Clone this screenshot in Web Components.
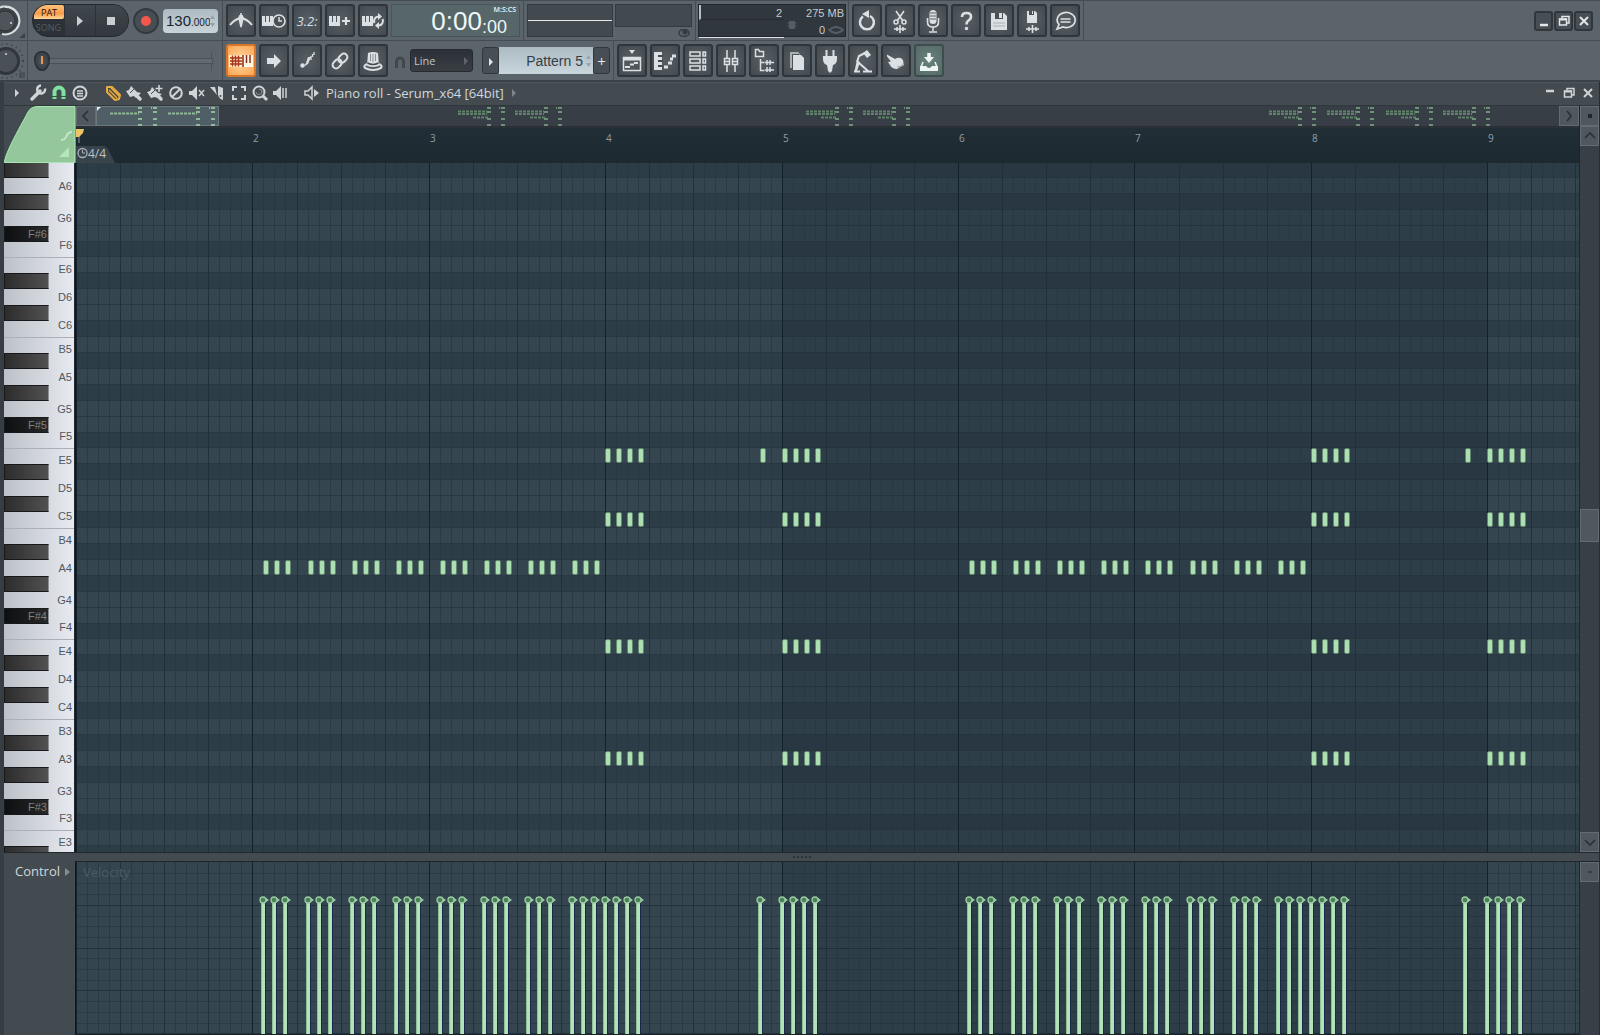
<!DOCTYPE html>
<html lang="en">
<head>
<meta charset="utf-8">
<title>Piano roll</title>
<style>
  html, body { margin: 0; height: 100%; background: #434b51; }
  body { font: 13px "Open Sans", "Noto Sans", sans-serif; color: #d5dade; }
  daw-app { height: 100vh; }
</style>
</head>
<body>
<daw-app></daw-app>
<script>
const BAR = 176.4, STEP = BAR / 16, ROW = 191 / 12;

/* One set of line icons; each is drawn in its own viewBox. */
const W = (x, y) => `<path fill="currentColor" stroke="none" d="M${x} ${y}h3v6h1v-6h3v6h1v-6h3v10h-11z"/>`;
const ICONS = {
  metronome: `<path d="M4 20q4-5 9-6.500M26 20q-4-5-9-6.500" fill="none" stroke-width="2"/><path d="M15 8v14M13 13l2 9 2-9z" fill="none" stroke-width="1.500"/><circle cx="15" cy="12" r="2" fill="currentColor"/>`,
  wait: W(3, 11) + `<circle cx="20" cy="16" r="6" fill="#4a5156" stroke-width="1.600"/><path d="M20 12v4h3" fill="none" stroke-width="1.500"/>`,
  count: ``,
  blend: W(4, 11) + `<path d="M21 12v8M17 16h8" fill="none" stroke-width="2.200"/>`,
  loop: W(4, 11) + `<path d="M16.500 18a4.500 4.500 0 0 1 4-6.500M24.500 14a4.500 4.500 0 0 1-4 6.500" fill="none" stroke-width="2"/><path d="M20 8l4 3.500-4 3.500zM21 24l-4-3.500 4-3.500z" fill="currentColor" stroke="none"/>`,
  keyboard: `<rect x="3" y="10" width="14" height="12" fill="#fff3cf" stroke="none"/><path d="M4 13h12M4 16h12M4 19h12M6.500 10.500v11M9.500 10.500v11M12.500 10.500v11" stroke="#a8351c" stroke-width="1.500" fill="none"/><path d="M17 10h10v12H17z" fill="#fff8e8" stroke="none"/><path d="M17 10v12M20.500 10v8M24 10v8" stroke="#8e2c18" stroke-width="1.500"/>`,
  arrow: `<path d="M8 13h7V9l7 7-7 7v-4H8z" fill="currentColor" stroke="none"/>`,
  slide: `<circle cx="10.500" cy="20.500" r="2.200" fill="currentColor" stroke="none"/><path d="M11 22l5-3 3-7h-3l-2 6z" fill="currentColor" stroke="none"/><path d="M19 15v-4M20.500 12v-3M22 10v-3" stroke-width="1.300"/>`,
  chain: `<g fill="none" stroke-width="2" transform="rotate(-45 15 16)"><rect x="6" y="12.500" width="10" height="7" rx="3.500"/><rect x="14" y="12.500" width="10" height="7" rx="3.500"/></g>`,
  hat: `<path d="M10 8q5-2 10 0l1 13q-6 2-12 0z" fill="currentColor" stroke="none"/><path d="M9 19q-4 2-2 4 8 4 16 0 2-2-2-4" fill="none" stroke-width="2"/><path d="M9.500 18q5.500 3 11 0" fill="none" stroke="#454c51" stroke-width="1.500"/><path d="M12.500 9v7M15 9v8M17.500 9v7" stroke="#8a9196" stroke-width="1"/>`,
  undo: `<path d="M11 11.500a7 7 0 1 0 7-.500" fill="none" stroke-width="2.500"/><path d="M10 9l7-4v8z" fill="currentColor" stroke="none"/>`,
  cut: `<path d="M11 6l7 10M19 6l-7 10" fill="none" stroke-width="1.600"/><circle cx="11" cy="17" r="2" fill="none" stroke-width="1.500"/><circle cx="19" cy="17" r="2" fill="none" stroke-width="1.500"/><path d="M9 24h12M12 22v4M15 20v8M18 22v4" stroke-width="1.600"/>`,
  mic: `<rect x="11.500" y="5" width="7" height="14" rx="3.500" fill="currentColor" stroke="none"/><path d="M12 8h6M12 11h6M12 14h6" stroke="#5a6268" stroke-width="1"/><path d="M9.500 13v4q0 5 5.500 5t5.500-5v-4M15 22v4M11 27h8" fill="none" stroke-width="1.600"/>`,
  help: `<path d="M11 12q0-4 4.500-4t4.500 3.500q0 2.500-2.500 4-2 1.500-2 4" fill="none" stroke-width="2.600"/><circle cx="15.500" cy="23.500" r="1.700" fill="currentColor" stroke="none"/>`,
  save: `<path d="M7 8h13l3 3v14H7z" fill="currentColor" stroke="none"/><rect x="11" y="8" width="8" height="6" fill="#4a5156" stroke="none"/><rect x="15" y="8" width="3" height="5" fill="currentColor" stroke="none"/><path d="M9 18h12M9 21h12" stroke="#aab0b4" stroke-width="1"/>`,
  saveNew: `<path d="M10 6h8l2 2v10H10z" fill="currentColor" stroke="none"/><path d="M12 6h5v4h-5z" fill="#4a5156" stroke="none"/><path d="M15 6h1v3h-1z" fill="currentColor" stroke="none"/><path d="M9 24h13M12 22v4M15.500 20v8M19 22v4" stroke-width="1.600"/>`,
  chat: `<path d="M7 24l2-4.500a9 7.500 0 1 1 4 2.500z" fill="none" stroke-width="1.700"/><path d="M10.500 14h10M10.500 17h10" stroke-width="1.500"/>`,
  playlist: `<rect x="6.500" y="12.500" width="17" height="13" fill="none" stroke-width="1.500"/><path d="M6 14h18" stroke-width="3"/><path d="M12 5h6l-3 4z" fill="currentColor" stroke="none"/><path d="M8 22h5M13 19.500h4M17 18h4" stroke-width="1.800"/>`,
  pianoroll: `<path d="M4 7h8v18H4z" fill="currentColor" stroke="none"/><path d="M8 11h5M8 16h5M8 21h5" stroke="#454c51" stroke-width="2"/><path d="M14 22h4M18 18h4M20 14h3M22 11h4" stroke-width="3"/>`,
  rack: `<g fill="none" stroke-width="1.500"><rect x="7" y="7" width="10" height="4"/><rect x="7" y="14" width="10" height="4"/><rect x="7" y="21" width="10" height="4"/><rect x="20" y="7" width="2.500" height="4"/><rect x="20" y="14" width="2.500" height="4"/><rect x="20" y="21" width="2.500" height="4"/></g>`,
  mixer: `<g fill="none" stroke-width="1.500"><path d="M11 5v8M11 20v7M19 5v8M19 20v7"/><rect x="8.500" y="13.500" width="5" height="6"/><rect x="16.500" y="13.500" width="5" height="6"/><path d="M8 16.500h6M16 16.500h6"/></g>`,
  browser: `<path d="M6.500 5.500v6h8v-5h-4l-1-2h-3z" fill="none" stroke-width="1.500"/><path d="M11.500 14v11.500h4M11.500 17.500h4" fill="none" stroke-width="1.500"/><path d="M16 17.500h9M18 15v5M21 15v5M16 25h9M18 22v5M21 22v5" stroke-width="1.500"/>`,
  pages: `<path d="M8 7h8l2 2v14H8z" fill="#aab1b5" stroke="none"/><path d="M11 10h8l3 3v12H11z" fill="currentColor" stroke="none"/><path d="M10.500 25V9.500h7" fill="none" stroke="#4a5156" stroke-width="1"/>`,
  plug: `<path d="M8 11h14v3q0 5-4 6l-1 6-2 2-2-2-1-6q-4-1-4-6z" fill="currentColor" stroke="none"/><path d="M11.500 5v7M18.500 5v7" stroke-width="2"/>`,
  script: `<path d="M15 8l4-3 4 5-4 3z" fill="currentColor" stroke="none"/><path d="M17 8l-6 3-2 6" fill="none" stroke-width="2"/><path d="M9 15l3 2-3 9H6.500z" fill="currentColor" stroke="none"/><path d="M11 18l9 8M6 26.500h6M15 26.500h9" fill="none" stroke-width="2"/>`,
  touch: `<path d="M6 9.500l8 4.500 2-1q4-1 6 2l1 5-7 4q-5 0-7-4l-2-3 3-.500-4-5z" fill="currentColor" stroke="none"/><path d="M16 22q6 0 7-5" fill="none" stroke="#8c9398" stroke-width="1"/>`,
  download: `<path d="M15 8v6" stroke-width="3.500"/><path d="M10 12h10l-5 6z" fill="currentColor" stroke="none"/><path d="M9 17l-2 5M21 17l2 5" fill="none" stroke-width="1.500"/><path d="M6 21h6q3 4 6 0h6v5H6z" fill="currentColor" stroke="none"/>`
};
/* Small tool icons, 20 x 20. */
const SMALL = {
  tri: `<path d="M8 6l4 4-4 4z" fill="currentColor"/>`,
  wrench: `<path d="M4 16l8-8" stroke="currentColor" stroke-width="3.500" stroke-linecap="round"/><path d="M17 5.500a4 4 0 1 1-4-3" fill="none" stroke="currentColor" stroke-width="2.500"/>`,
  magnet: `<path d="M5.500 16V9a4.500 4.500 0 0 1 9 0v7" fill="none" stroke="currentColor" stroke-width="4"/><path d="M3 13.500h5M12 13.500h5" stroke="#2c5a3c"/>`,
  list: `<circle cx="10" cy="10" r="6.500" fill="none" stroke="currentColor" stroke-width="2"/><path d="M7 8h6M7 10.500h6M7 13h6" stroke="currentColor" stroke-width="1.400"/>`,
  pencil: `<path d="M4 4l5 0 8 8-1 4-4 1-8-8z" fill="#4c4535" stroke="#e6ab45" stroke-width="2" stroke-linejoin="round"/><path d="M6 7l8 8M8 5l8 8" stroke="#e6ab45" stroke-width="1.500"/>`,
  brush: `<path d="M2 8l3-1 2-4 6 6 4 1-5 5-2-2-4 1z" fill="currentColor"/><path d="M12 12l4 4" stroke="currentColor" stroke-width="3.500" stroke-linecap="round"/><path d="M6 10l5-5" stroke="#434b51"/>`,
  brush2: `<path d="M2 9l3-1 2-4 6 6 4 1-5 4-2-1-4 1z" fill="currentColor"/><path d="M12 12l4 4" stroke="currentColor" stroke-width="3.500" stroke-linecap="round"/><path d="M6 11l5-5" stroke="#434b51"/><path d="M14 2v7M10.500 5.500h7" stroke="currentColor" stroke-width="1.600"/>`,
  no: `<circle cx="10" cy="10" r="5.800" fill="none" stroke="currentColor" stroke-width="2"/><path d="M6 14l8-8" stroke="currentColor" stroke-width="2"/>`,
  mute: `<path d="M2 8h3l5-5v14l-5-5H2z" fill="currentColor"/><path d="M12 7l5 6M17 7l-5 6" stroke="currentColor" stroke-width="1.500"/>`,
  knife: `<path d="M2 4h5l2 8z" fill="currentColor"/><path d="M10 3l5 2v12q-4-1-5-5z" fill="currentColor"/><circle cx="12.500" cy="13" r="1" fill="#434b51"/>`,
  select: `<path d="M4 8V4h4M12 4h4v4M16 12v4h-4M8 16H4v-4" fill="none" stroke="currentColor" stroke-width="2"/>`,
  zoom: `<circle cx="9" cy="9" r="5.500" fill="none" stroke="currentColor" stroke-width="2"/><path d="M6 9a3 3 0 0 0 6-1M9 6a3 3 0 0 1 3 3" fill="none" stroke="#8d959b"/><path d="M13 13l4 4" stroke="currentColor" stroke-width="3"/>`,
  play: `<path d="M2 8h3l5-5v14l-5-5H2z" fill="currentColor"/><path d="M12 5v10M15 5v10" stroke="currentColor" stroke-width="1.500"/>`,
  speaker: `<path d="M3 8h3l4-4v12l-4-4H3z" fill="none" stroke="currentColor" stroke-width="1.500"/><path d="M12 6l5 4-5 4z" fill="currentColor"/>`,
  min: `<path d="M6 8h8" stroke="currentColor" stroke-width="2.500"/>`,
  minLow: `<path d="M6 14h8" stroke="currentColor" stroke-width="2.500"/>`,
  restore: `<path d="M8 7V5.500h7V12h-2" fill="none" stroke="currentColor" stroke-width="1.500"/><rect x="5.500" y="8" width="7" height="6" fill="none" stroke="currentColor" stroke-width="1.500"/><path d="M5 8.500h8" stroke="currentColor" stroke-width="2"/>`,
  close: `<path d="M6 6l8 8M14 6l-8 8" stroke="currentColor" stroke-width="2"/>`,
  left: `<path d="M12 5l-5 5 5 5" fill="none" stroke="#2a3137" stroke-width="1.700"/>`,
  right: `<path d="M8 5l4 5-4 5" fill="none" stroke="#2a3137" stroke-width="1.700"/>`,
  up: `<path d="M5 12l5-5 5 5" fill="none" stroke="#2a3137" stroke-width="1.700"/>`,
  down: `<path d="M5 8l5 5 5-5" fill="none" stroke="#2a3137" stroke-width="1.700"/>`,
  dot: `<rect x="8" y="8" width="4" height="4" fill="#20262b"/>`,
  dash: `<path d="M8 10h4" stroke="#20262b"/>`
};

function define(name, html, after) {
  customElements.define(name, class extends HTMLElement {
    connectedCallback() {
      if (this.shadowRoot) return;
      const root = this.attachShadow({ mode: "open" });
      root.innerHTML = typeof html === "function" ? html(this) : html;
      if (after) after(root, this);
    }
  });
}

/* Square toolbar button with a large icon, or slotted text. */
define("tool-button", el => `
<style>
  :host { display: block; flex: none; }
  button { display: grid; place-items: center; box-sizing: border-box; width: 30px; height: 33px; padding: 0;
    border: 2px solid #2f363b; border-radius: 3px; color: #dbe0e4;
    background: radial-gradient(#575f65, #434a4f); font: italic 13px "Open Sans", sans-serif; }
  :host([tone="orange"]) button { background: radial-gradient(#ffd9a0, #fba452); border-color: #d9762a; }
  :host([tone="green"]) button { background: radial-gradient(#6a827d, #566a68); border-color: #3c4d4e; color: #eef6f4; }
  svg { display: block; margin: -2px; }
</style>
<button aria-label="${el.getAttribute("label")}">${ICONS[el.getAttribute("icon")] ? `<svg width="30" height="32" viewBox="0 0 30 32" stroke="currentColor">${ICONS[el.getAttribute("icon")]}</svg>` : "<slot></slot>"}</button>`);

/* Small 20 px button. */
define("mini-button", el => `
<style>
  :host { display: block; flex: none; }
  button { display: block; box-sizing: border-box; width: 100%; height: 20px; padding: 0; border: 0; background: none; color: inherit; }
  svg { display: block; margin: auto; }
  :host([kind="box"]) button { border: 1px solid #646c72; background: #50585f; }
  :host([kind="box"]) svg { margin: -1px; }
  :host([kind="win"]) button { border: 2px solid #30373c; border-radius: 3px; background: #474e54; }
  :host([kind="win"]) svg { margin: -2px; }
</style>
<button aria-label="${el.getAttribute("label")}"><svg width="20" height="20" viewBox="0 0 20 20">${SMALL[el.getAttribute("icon")]}</svg></button>`);

define("transport-bar", `
<style>
  :host { display: flex; align-items: center; gap: 4px; padding: 0 4px; }
  .pill { display: flex; width: 97px; height: 33px; border-radius: 16px; overflow: hidden; background: #2b3136; box-sizing: border-box; border: 1px solid #23282d; }
  .mode { display: flex; flex-direction: column; width: 31px; }
  button { border: 0; padding: 0; background: none; font: 9px "Open Sans", sans-serif; color: #565d62; }
  .pat { height: 14px; margin-left: 1px; border-radius: 10px 2px 2px 0; background: linear-gradient(#ffc37c, #f99b48 60%, #ffd79a); color: #1d1309; }
  .song { flex: 1; }
  .key { width: 30px; margin-left: 1px; background: linear-gradient(#40474d, #32383d); display: grid; place-items: center; }
  .stop { flex: 1; padding-right: 2px; }
  .rec { width: 26px; height: 26px; border-radius: 50%; background: #474e53; border: 2px solid #33393e; display: grid; place-items: center; }
  .tempo { display: flex; align-items: center; box-sizing: border-box; width: 55px; height: 24px; padding: 0 3px; border-radius: 4px; background: linear-gradient(#aebac1, #c8d4da); }
  input { border: 0; padding: 0; background: none; color: #1c242b; font: 15px/24px "Liberation Sans", sans-serif; width: 25px; height: 24px; outline: 0; }
  input + input { width: 19px; font-size: 10px; height: 20px; padding-top: 4px; line-height: 20px; box-sizing: border-box; }
  .spin { flex: none; margin-left: auto; }
</style>
<div class="pill">
  <div class="mode"><button class="pat">PAT</button><button class="song">SONG</button></div>
  <button class="key" aria-label="Play"><svg width="8" height="12"><path d="M1 1l6 5-6 5z" fill="#c9ced2"/></svg></button>
  <button class="key stop" aria-label="Stop"><svg width="8" height="8"><rect width="8" height="8" fill="#c9ced2"/></svg></button>
</div>
<button class="rec" aria-label="Record"><svg width="10" height="10"><circle cx="5" cy="5" r="5" fill="#f4574d"/></svg></button>
<div class="tempo"><input aria-label="Tempo" value="130"><input aria-label="Tempo fraction" value=".000"><svg class="spin" width="5" height="12"><path d="M0 4l2.500-4L5 4zM0 8l2.500 4L5 8z" fill="#93a0a8"/></svg></div>`);

define("position-slider", `
<style>
  :host { display: flex; align-items: center; padding: 0 9px 0 6px; }
  label { flex: 1; display: flex; }
  input { appearance: none; -webkit-appearance: none; flex: 1; min-width: 0; margin: 0; height: 30px; outline: 0;
    background: linear-gradient(#62696f, #62696f) 9px 13px / calc(100% - 10px) 4px no-repeat, linear-gradient(#4a5157, #4a5157) 8px 12px / calc(100% - 8px) 6px no-repeat,
      linear-gradient(#4a5157, #4a5157) calc(100% - 1px) 6px / 1px 19px no-repeat; }
  input::-webkit-slider-thumb { -webkit-appearance: none; width: 16px; height: 20px; border-radius: 8px 8px 8px 8px / 8px 8px 12px 12px; border: 1px solid #23282c;
    background: linear-gradient(#e3955a, #e3955a) 6px 4px / 2px 8px no-repeat, radial-gradient(#50585e, #2b3136); }
</style>
<label><input type="range" min="0" max="100" value="0" aria-label="Song position"></label>`);

define("time-display", `
<style>
  :host { display: flex; justify-content: flex-end; box-sizing: border-box; width: 129px; height: 33px; padding-right: 3px; border: 1px solid #465656; background: #566669; color: #edf7f8; font-family: "Liberation Sans", sans-serif; }
  .main { font-size: 26px; line-height: 33px; }
  .side { display: flex; flex-direction: column; align-items: flex-end; }
  .unit { font: 600 7px/10px "Open Sans", sans-serif; }
  .cs { font-size: 18px; line-height: 24px; margin-right: 9px; }
</style>
<div class="main">0:00</div><div class="side"><div class="unit">M:S:CS</div><div class="cs">:00</div></div>`);

define("scope-panel", `
<style>
  :host { display: flex; gap: 2px; align-items: flex-start; }
  .scope { box-sizing: border-box; width: 86px; height: 33px; border: 1px solid #343b41; background: linear-gradient(#e3e8ea, #e3e8ea) 0 15px / 100% 1px no-repeat, #42494f; }
  .peak { display: flex; flex-direction: column; align-items: flex-end; gap: 2px; }
  .meter { box-sizing: border-box; width: 77px; height: 23px; border: 1px solid #343b41; background: #42494f; }
  .peak svg { margin-right: 2px; }
</style>
<div class="scope"></div><div class="peak"><div class="meter"></div><svg width="12" height="8"><ellipse cx="6" cy="4" rx="5" ry="3.500" fill="none" stroke="#343b41" stroke-width="1.500"/><circle cx="7" cy="3" r="2.500" fill="#343b41"/></svg></div>`);

define("load-panel", `
<style>
  :host { display: grid; grid-template-columns: 85px 1fr; box-sizing: border-box; width: 148px; height: 33px; border: 1px solid #22282d; background: #30373d; color: #c5cbd0; font: 11px/16px "Liberation Sans", sans-serif; }
  .cpu { border-left: 2px solid #b8bec2; border-bottom: 1px solid #262c31; text-align: right; padding-right: 2px; height: 14px; }
  .left { border-bottom: 1px solid #dfe3e6; display: flex; flex-direction: column; box-sizing: border-box; }
  .right { text-align: right; padding-right: 1px; margin-left: 3px; }
  .poly { display: flex; align-items: center; justify-content: flex-end; gap: 3px; height: 17px; }
  .chip { margin-right: auto; align-self: flex-start; }
</style>
<div class="left"><div class="cpu">2</div></div>
<div class="right"><div>275 MB</div><div class="poly"><svg class="chip" width="10" height="8"><path d="M0 2h10M0 5h10" stroke="#4c545a"/><rect x="2" width="6" height="8" fill="#565e64"/></svg><span>0</span><svg width="16" height="8"><path d="M1 4q7-6 14 0q-7 6-14 0z" fill="none" stroke="#565e64" stroke-width="2"/></svg></div></div>`);

define("snap-select", `
<style>
  :host { display: flex; align-items: center; gap: 3px; margin-left: 2px; color: #41484d; }
  .box { display: grid; align-items: center; }
  select { grid-area: 1 / 1; appearance: none; -webkit-appearance: none; box-sizing: border-box; width: 63px; height: 23px; padding: 0 0 0 3px; border: 1px solid #262b30; border-radius: 3px; background: linear-gradient(#2b3136, #383e44); color: #bfc5c9; font: 11px "Open Sans", sans-serif; }
  .box svg { grid-area: 1 / 1; justify-self: end; margin-right: 4px; pointer-events: none; }
</style>
<svg width="14" height="16"><path d="M3.500 15V8.500a3.500 3.500 0 0 1 7 0V15" fill="none" stroke="currentColor" stroke-width="3"/></svg>
<div class="box"><select aria-label="Snap"><option>Line</option></select><svg width="6" height="10"><path d="M1 1l4 4-4 4z" fill="#5d656b"/></svg></div>`);

define("pattern-picker", `
<style>
  :host { display: flex; height: 27px; margin-left: 6px; }
  button { box-sizing: border-box; width: 17px; padding: 0; border: 1px solid #30373c; border-radius: 3px; background: #474e54; color: #e2e6e9; font: 15px/20px "Open Sans", sans-serif; }
  .field { display: flex; align-items: center; box-sizing: border-box; width: 94px; padding-right: 2px; background: linear-gradient(#acbac2, #c9d6dc); }
  input { min-width: 0; flex: 1; border: 0; padding: 0; background: none; outline: 0; text-align: right; color: #343f48; font: 14px/24px "Liberation Sans", sans-serif; }
  .field svg { margin-left: 3px; flex: none; }
</style>
<button aria-label="Pattern menu"><svg width="6" height="10"><path d="M1 1l4 4-4 4z" fill="#e2e6e9"/></svg></button>
<div class="field"><input aria-label="Pattern" value="Pattern 5"><svg width="5" height="12"><path d="M0 4l2.500-4L5 4zM0 8l2.500 4L5 8z" fill="#98a5ad"/></svg></div>
<button aria-label="Add pattern">+</button>`);

const tb = (icon, label, tone) => `<tool-button icon="${icon}" label="${label}"${tone ? ` tone="${tone}"` : ""}></tool-button>`;
define("main-toolbar", `
<style>
  :host { display: block; background: #5b646a; border-bottom: 2px solid #3a4147; }
  .row { display: flex; height: 39px; border-top: 1px solid #454d54; }
  .row + .row { height: 39px; }
  .g { display: flex; align-items: center; gap: 3px; padding: 0 3px; border-right: 1px solid #454d54; flex: none; }
  .g:last-child, .g.open { border-right: 0; }
  .knob { padding: 0; width: 27px; }
  .mid { width: 194px; padding: 0; }
  .mid > * { flex: 1; }
  .load { padding: 0 2px; }
  .edge { padding: 0; }
  .push { margin-left: auto; gap: 1px; padding-right: 7px; }
  mini-button { width: 19px; color: #e3e7ea; }
</style>
<div class="row">
  <div class="g knob"><svg width="27" height="38"><circle cx="5" cy="19" r="14" fill="#3c4348"/><circle cx="5" cy="19" r="10" fill="#4d555b" stroke="#2d3338"/><path d="M2 32A14 14 0 1 0 -5 9M5 5a14 14 0 0 1 13 20" fill="none" stroke="#d8dde0" stroke-width="2"/><circle cx="11" cy="21" r="1" fill="#d8dde0"/><path d="M25 31v5h-6z" fill="#3b4247"/></svg></div>
  <div class="g mid"><transport-bar></transport-bar></div>
  <div class="g open">${tb("metronome", "Metronome")}${tb("wait", "Wait for input")}<tool-button icon="count" label="Countdown">3.2:</tool-button>${tb("blend", "Blend recording")}${tb("loop", "Loop recording")}<time-display></time-display></div>
  <div class="g edge"></div>
  <div class="g"><scope-panel></scope-panel></div>
  <div class="g load"><load-panel></load-panel></div>
  <div class="g">${tb("undo", "Undo")}${tb("cut", "Cut")}${tb("mic", "Record audio")}${tb("help", "Help")}${tb("save", "Save")}${tb("saveNew", "Save new version")}${tb("chat", "Feedback")}</div>
  <div class="g push"><mini-button kind="win" icon="minLow" label="Minimize"></mini-button><mini-button kind="win" icon="restore" label="Restore"></mini-button><mini-button kind="win" icon="close" label="Close"></mini-button></div>
</div>
<div class="row">
  <div class="g knob"><svg width="27" height="38"><circle cx="6" cy="19" r="14" fill="#30363b"/><circle cx="6" cy="19" r="11" fill="#495157"/><circle cx="6" cy="19" r="17" fill="none" stroke="#3c4349" stroke-width="2" stroke-dasharray="1 4"/><circle cx="6" cy="12" r="1" fill="#cfd5d8"/><path d="M20 31h5M20 33h5M20 35h5M20 31v5" stroke="#3c4349" fill="none"/></svg></div>
  <div class="g mid"><position-slider></position-slider></div>
  <div class="g">${tb("keyboard", "Typing keyboard", "orange")}${tb("arrow", "Auto scroll")}${tb("slide", "Slide")}${tb("chain", "Link")}${tb("hat", "Metronome hat")}<snap-select></snap-select><pattern-picker></pattern-picker></div>
  <div class="g">${tb("playlist", "Playlist")}${tb("pianoroll", "Piano roll")}${tb("rack", "Channel rack")}${tb("mixer", "Mixer")}${tb("browser", "Browser")}${tb("pages", "Project")}${tb("plug", "Plugins")}${tb("script", "Tools")}${tb("touch", "Touch")}${tb("download", "Download", "green")}</div>
</div>`);

const mb = (icon, label) => `<mini-button icon="${icon}" label="${label}"></mini-button>`;
define("roll-titlebar", `
<style>
  :host { display: flex; align-items: flex-start; height: 22px; padding-left: 2px; border-top: 1px solid #4e565d; background: #434b51; }
  mini-button { width: 21px; color: #cfd4d8; }
  .snap { color: #7fe0a0; }
  .tools { display: flex; margin-left: 12px; }
  .name { margin-left: 4px; font-size: 13px; line-height: 20px; white-space: nowrap; color: #d2d7db; }
  .grey { color: #7d858b; width: 17px; }
  .win { display: flex; margin-left: auto; gap: 0; margin-right: 2px; color: #e3e7ea; }
  .win mini-button { width: 19px; }
  .channel { margin-left: 10px; }
</style>
${mb("tri", "Options")}${mb("wrench", "Tools")}<mini-button class="snap" icon="magnet" label="Snap"></mini-button>${mb("list", "Stamp")}
<div class="tools">${["pencil", "brush", "brush2", "no", "mute", "knife", "select", "zoom", "play"].map(n => mb(n, n)).join("")}</div>
<mini-button class="channel" icon="speaker" label="Preview"></mini-button>
<span class="name">Piano roll - Serum_x64 [64bit]</span><mini-button class="grey" icon="tri" label="Channel menu"></mini-button>
<div class="win">${mb("min", "Minimize")}${mb("restore", "Restore")}${mb("close", "Close")}</div>`);

/* Three-note groups, then chords, over a repeating four-bar phrase. */
const NOTES = [];
for (const base of [0, 64]) {
  for (let g = 0; g < 8; g++) for (let i = 1; i < 4; i++) NOTES.push([base + 16 + g * 4 + i, "A4"]);
  for (const s of [48, 49, 50, 51, 64, 65, 66, 67]) for (const k of ["E5", "C5", "E4", "A3"]) NOTES.push([base + s, k]);
  NOTES.push([base + 62, "E5"]);
}

define("song-overview", `
<style>
  :host { display: flex; height: 20px; background: #373e45; border-bottom: 1px solid #2a3036; }
  mini-button { width: 20px; }
  svg { flex: 1; min-width: 0; height: 20px; }
</style>
<mini-button kind="box" icon="left" label="Scroll left"></mini-button><svg></svg><mini-button kind="box" icon="right" label="Scroll right"></mini-button>`, root => {
  const chord = (x, w) => [0, 4, 11, 17].map(y => `<rect x="${x}" y="${y + 1}" width="${w}" height="2"/>`).join("");
  let s = `<rect width="122" height="19" x=".500" y=".500" fill="#505f66" stroke="#6b787e"/><path d="M1 1h4l-4 4z" fill="#e6eaec"/>`;
  const thin = x => `<path d="M${x} 7.500h29" stroke="#8fba97" stroke-width="2" stroke-dasharray="3 1"/><g fill="#8fba97">${chord(x + 28, 4)}${chord(x + 43, 4)}<rect x="${x + 41}" y="1" width="1" height="2"/></g>`;
  const thick = x => `<path d="M${x} 5.500h29M${x} 8h29M${x + 15} 11.500h15" stroke="#5f8069" stroke-width="2" stroke-dasharray="3 1"/><g fill="#6d9177">${chord(x + 29, 4)}${chord(x + 43, 4)}<rect x="${x + 41}" y="1" width="1" height="2"/></g>`;
  s += thin(14) + thin(72) + [362, 419, 710, 767, 1173, 1231, 1290, 1347].map(thick).join("");
  root.querySelector("svg").innerHTML = s;
});

define("time-ruler", `
<style>
  :host { display: block; height: 35px; margin-top: 1px; border-bottom: 1px solid #2f3a41; background: linear-gradient(#212e36, #1c2931); }
  svg { display: block; width: 100%; height: 35px; font-family: "Open Sans", sans-serif; }
</style><svg></svg>`, (root, host) => {
  let s = `<path d="M0 18h28q4 1 6 7l5 10H0z" fill="#38444b"/><path d="M3 3v12" stroke="#8b949a"/><path d="M0 1h8l-1 4-4 4H0z" fill="#efc469"/>
  <circle cx="6.500" cy="25" r="4.500" fill="none" stroke="#a9b1b6" stroke-width="1.300"/><path d="M6.500 22v3h2.500" fill="none" stroke="#a9b1b6"/>
  <text x="12" y="30" font-size="12" fill="#bcc3c7">4/4</text>`;
  for (let b = 1; b * BAR < host.clientWidth - 10; b++) s += `<text x="${Math.round(b * BAR) + 1}" y="14" font-size="10" fill="#939ca2">${b + 1}</text>`;
  root.querySelector("svg").innerHTML = s;
});

define("piano-keys", `
<style>
  :host { display: block; height: 0; min-height: 100%; overflow: hidden; background: #23282c; }
  .stack { margin: -17px 2px 0 0; }
  .oct { display: grid; height: 191px; grid-template: repeat(24, 1fr) / 45px 1fr; color: #50585e; font: 11px/12px "Liberation Sans", sans-serif; }
  .w { grid-column: 1 / 3; display: flex; align-items: center; justify-content: flex-end; padding-right: 2px; background: linear-gradient(90deg, #bcc1c9, #d5d9df 58%, #e7eaf1); }
  .e, .b { box-shadow: inset 0 1px #aab0b8; }
  .k { grid-column: 1; z-index: 1; box-sizing: border-box; border: 1px solid #17191b; border-right: 1px solid #8d9093; background: linear-gradient(90deg, #2c2c2d, #515152); display: flex; align-items: center; justify-content: flex-end; padding-right: 1px; color: #84817c; }
  .fs { background: linear-gradient(90deg, #0e0f10, #27282a); }
</style><div class="stack"></div>`, (root, host) => {
  const white = [["B", 1, 3], ["A", 4, 4], ["G", 8, 4], ["F", 12, 3], ["E", 15, 3], ["D", 18, 4], ["C", 22, 3]];
  const black = [["", 3], ["", 7], ["F#", 11], ["", 17], ["", 21]];
  root.querySelector(".stack").innerHTML = [6, 5, 4, 3].map(o => `<div class="oct">` +
    white.map(([n, r, h]) => `<div class="w ${n.toLowerCase()}" style="grid-row:${r}/span ${h}">${n}${o}</div>`).join("") +
    black.map(([n, r]) => `<div class="k${n ? " fs" : ""}" style="grid-row:${r}/span 2">${n && n + o}</div>`).join("") + `</div>`).join("");
  /* A key whose middle is scrolled out of view carries no label. */
  const view = host.getBoundingClientRect();
  for (const key of root.querySelectorAll(".w")) {
    const r = key.getBoundingClientRect(), mid = (r.top + r.bottom) / 2;
    if (mid < view.top + 6 || mid > view.bottom - 6) key.textContent = "";
  }
});

/* Vertical step, beat and bar lines shared by both lanes. */
function columns(h) {
  let s = `<rect x="${Math.round(4 * BAR)}" width="${Math.round(4 * BAR)}" height="${h}" fill="#0c1a24" fill-opacity=".15"/>`;
  for (let i = 0; i < 260; i++) {
    const x = Math.round(i * STEP), kind = i % 16 === 0 ? ["#12212b", 1] : i % 4 === 0 ? ["#1e2e38", .85] : ["#263640", .7];
    s += `<rect x="${x}" width="1" height="${h}" fill="${kind[0]}" fill-opacity="${kind[1]}"/>`;
  }
  return s;
}

define("note-grid", `
<style>
  :host { display: block; height: 0; min-height: 100%; overflow: hidden; background: #34454f; }
  svg { display: block; width: 100%; height: 1400px; }
</style><svg></svg>`, root => {
  const top = -17, dark = [1, 3, 6, 8, 11];
  let s = "";
  for (let r = 0; r < 84; r++) {
    const y = Math.round(top + r * ROW), y2 = Math.round(top + (r + 1) * ROW);
    s += `<rect y="${y}" width="100%" height="${y2 - y}" fill="${dark.includes(r % 12) ? "#2d3d48" : "#34454f"}"/><rect y="${y2 - 1}" width="100%" height="1" fill="#293842"/>`;
  }
  s += columns(1400);
  const names = "B,A#,A,G#,G,F#,F,E,D#,D,C#,C".split(",");
  for (const [step, key] of NOTES) {
    const row = (6 - key[1]) * 12 + names.indexOf(key[0]);
    s += `<rect x="${Math.round(step * STEP) + .5}" y="${Math.round(top + row * ROW) + .5}" width="5" height="14" rx="1.500" fill="#ace0b2" stroke="#64866e"/>`;
  }
  root.querySelector("svg").innerHTML = s;
});

define("velocity-lane", `
<style>
  :host { display: grid; overflow: hidden; background: #34454f; border-bottom: 1px solid #1c242a; }
  svg { grid-area: 1 / 1; width: 100%; height: 100%; }
  span { grid-area: 1 / 1; justify-self: start; align-self: start; padding: 1px 7px; font-size: 13px; line-height: 18px; color: #4a5a64; }
</style><svg></svg><span>Velocity</span>`, root => {
  let s = "";
  for (let i = 1; i < 17; i++) s += `<rect y="${Math.round(i * 10.7)}" width="100%" height="1" fill="${i % 4 ? "#2b3b45" : "#22323c"}"/>`;
  s += columns(400);
  for (const step of [...new Set(NOTES.map(n => n[0]))]) {
    const x = Math.round(step * STEP);
    s += `<rect x="${x + 2}" y="41" width="1" height="400" fill="#1b2748"/><rect x="${x - 2}" y="41" width="4" height="400" fill="#8fbf98"/><rect x="${x - 1}" y="41" width="3" height="400" fill="#b2e3b8"/><path d="M${x + 3} 36l3 2-3 2z" fill="#9fd0a6"/><circle cx="${x}" cy="38" r="3" fill="#4a8058" stroke="#9bcba2" stroke-width="1.300"/>`;
  }
  root.querySelector("svg").innerHTML = s;
});

define("scroll-rail", `
<style>
  :host { display: flex; flex-direction: column; background: #383f46; }
  .gap { flex: 365; } .rest { flex: 291; }
  .thumb { height: 33px; box-sizing: border-box; border: 1px solid #646c72; background: #50585f; flex: none; }
</style>
<mini-button kind="box" icon="dot" label="Zoom"></mini-button><mini-button kind="box" icon="up" label="Scroll up"></mini-button>
<div class="gap"></div><div class="thumb"></div><div class="rest"></div>
<mini-button kind="box" icon="down" label="Scroll down"></mini-button>`);

define("piano-roll", `
<style>
  :host { display: flex; flex-direction: column; min-height: 0; border-left: 4px solid #363d43; border-right: 1px solid #262c31; background: #434b51; }
  .body { flex: 1; min-height: 0; display: grid; grid-template: 57px minmax(0, 1fr) 9px 174px / 72px minmax(0, 1fr) 20px; border-top: 1px solid #2f363c; }
  .corner { background: #434b51; }
  .corner svg { display: block; }
  .head { display: flex; flex-direction: column; overflow: hidden; background: #2a3238; }
  note-grid, velocity-lane { border-left: 1px solid #10181e; margin-left: -1px; }
  .side { grid-column: 3; grid-row: 1 / 3; border-left: 1px solid #1e252a; }
  .split { grid-column: 1 / 4; box-sizing: border-box; border-top: 1px solid #22292e; display: flex; justify-content: center; align-items: center; gap: 2px; background: #434b51; }
  .split i { width: 2px; height: 2px; background: #2b3237; }
  .control { display: flex; align-items: flex-start; gap: 5px; padding: 0 0 0 11px; line-height: 20px; }
  .control button { border: 0; padding: 0; background: none; color: #d2d7db; font: 13px/20px "Open Sans", sans-serif; }
  .control svg { margin-top: 7px; }
  velocity-lane, .side2 { border-top: 1px solid #1e262c; }
  .side2 { border-left: 1px solid #1e252a; background: #383f46; }
</style>
<roll-titlebar></roll-titlebar>
<div class="body">
  <div class="corner"><svg width="72" height="57"><path d="M.500 57C0 48 20 14 24 6Q27 .500 34 .500H71V56.500H.500z" fill="#94c79b" stroke="#a9e5b2"/><path d="M57 34q4 0 5.500-4t5.500-4" fill="none" stroke="#c2e8c6" stroke-width="2"/><path d="M65 41v10H55z" fill="#b6e6bc"/></svg></div>
  <div class="head"><song-overview></song-overview><time-ruler></time-ruler></div>
  <scroll-rail class="side"></scroll-rail>
  <piano-keys></piano-keys>
  <note-grid></note-grid>
  <div class="split"><i></i><i></i><i></i><i></i><i></i></div>
  <div class="control"><button>Control</button><svg width="5" height="9"><path d="M0 0l5 4-5 4z" fill="#858d92"/></svg></div>
  <velocity-lane></velocity-lane>
  <div class="side2"><mini-button kind="box" icon="dash" label="Collapse"></mini-button></div>
</div>`);

define("daw-app", `
<style>
  :host { display: flex; flex-direction: column; }
  main-toolbar { flex: none; }
  piano-roll { flex: 1; }
</style>
<main-toolbar></main-toolbar><piano-roll></piano-roll>`);
</script>
</body>
</html>
